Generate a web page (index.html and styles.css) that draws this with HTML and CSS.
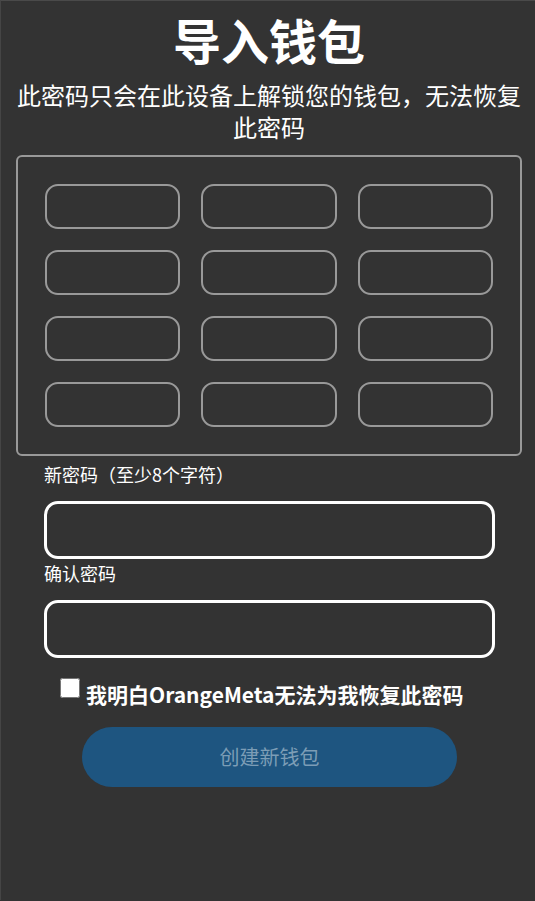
FILE: index.html
```html
<!DOCTYPE html>
<html lang="zh-CN">
<head>
<meta charset="utf-8">
<title>导入钱包</title>
<link rel="stylesheet" href="styles.css">
</head>
<body>
<div class="page">
  <header class="header">
    <h1 class="title">导入钱包</h1>
    <p class="subtitle">此密码只会在此设备上解锁您的钱包，无法恢复此密码</p>
  </header>

  <div class="words">
    <input class="word" type="text">
    <input class="word" type="text">
    <input class="word" type="text">
    <input class="word" type="text">
    <input class="word" type="text">
    <input class="word" type="text">
    <input class="word" type="text">
    <input class="word" type="text">
    <input class="word" type="text">
    <input class="word" type="text">
    <input class="word" type="text">
    <input class="word" type="text">
  </div>

  <form class="form">
    <label class="field-label first" for="pw1">新密码（至少8个字符）</label>
    <input class="field" id="pw1" type="password">
    <label class="field-label" for="pw2">确认密码</label>
    <input class="field" id="pw2" type="password">

    <div class="agree">
      <input class="check" id="agree" type="checkbox">
      <label class="agree-text" for="agree">我明白OrangeMeta无法为我恢复此密码</label>
    </div>

    <button class="submit" type="button" disabled>创建新钱包</button>
  </form>
</div>
</body>
</html>
```

FILE: styles.css
```css
html, body {
  margin: 0;
  padding: 0;
  background: #333333;
}

body {
  font-family: "Noto Sans CJK SC", "Noto Sans", sans-serif;
  color: #ffffff;
}

.page {
  min-height: 900px;
  box-sizing: border-box;
  border-top: 1px solid #4a4a4a;
  border-left: 1px solid #454545;
  padding: 0 13px 0 15px;
}

.header {
  text-align: center;
  padding-top: 13px;
}

.title {
  margin: 0;
  font-size: 48px;
  line-height: 50px;
  font-weight: 700;
}

.subtitle {
  margin: 15px 0 0;
  font-size: 24px;
  line-height: 32px;
  font-weight: 400;
}

.words {
  margin-top: 12px;
  border: 2px solid #999999;
  border-radius: 6px;
  padding: 27px;
  display: grid;
  grid-template-columns: repeat(3, 1fr);
  gap: 21px;
}

.word {
  box-sizing: border-box;
  width: 100%;
  height: 45px;
  margin: 0;
  border: 2px solid #999999;
  border-radius: 13px;
  background: transparent;
  color: #ffffff;
  font-family: inherit;
  font-size: 16px;
  padding: 0 12px;
  outline: none;
}

.form {
  margin: 0;
  padding: 0 27px 0 28px;
}

.field-label {
  display: block;
  margin: 2px 0 15px;
  font-size: 18px;
  line-height: 24px;
}

.field-label.first {
  margin-top: 6px;
}

.field {
  display: block;
  box-sizing: border-box;
  width: 100%;
  height: 58px;
  margin: 0;
  border: 3px solid #ffffff;
  border-radius: 14px;
  background: transparent;
  color: #ffffff;
  font-family: inherit;
  font-size: 18px;
  padding: 0 14px;
  outline: none;
}

.agree {
  display: flex;
  align-items: flex-start;
  gap: 6px;
  margin-top: 22px;
  padding-left: 16px;
}

.check {
  width: 20px;
  height: 20px;
  margin: -2px 0 0;
  flex: none;
}

.agree-text {
  font-size: 21px;
  line-height: 28px;
  font-weight: 700;
}

.submit {
  display: block;
  width: 375px;
  height: 60px;
  margin: 19px auto 0;
  border: none;
  border-radius: 30px;
  background: #1e5580;
  color: #7c9db6;
  font-family: inherit;
  font-size: 20px;
  line-height: 28px;
}
```
